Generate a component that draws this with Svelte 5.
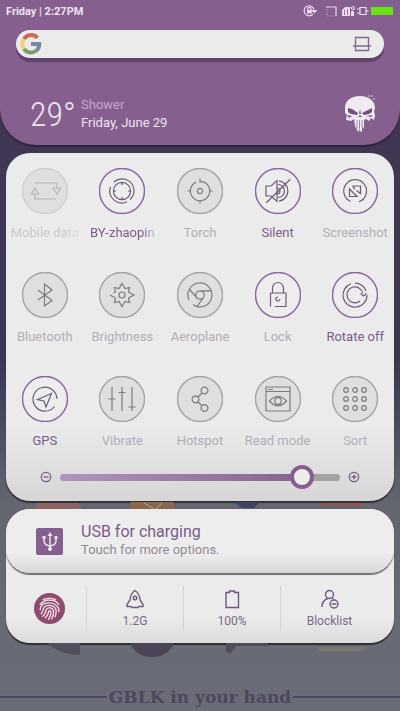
<script lang="ts">
  type Tile = {
    label: string;
    icon: string;
    active?: boolean;
    lit?: boolean;
    faint?: boolean;
    fading?: boolean;
  };

  const ring = (x: number, y: number, r: number) =>
    `M${x - r} ${y}a${r} ${r} 0 1 1 ${2 * r} 0a${r} ${r} 0 1 1 ${-2 * r} 0`;

  const sortDots = [14, 23, 32]
    .flatMap((y) => [14, 23, 32].map((x) => ring(x, y, 2.3)))
    .join('');

  let tiles = $state<Tile[]>([
    {
      label: 'Mobile data',
      faint: true,
      fading: true,
      icon: 'M13 15H35V21M31 20L35 26L38.500 20ZM13 26V31H34M9.500 26L13 20L16.500 26Z',
    },
    {
      label: 'BY-zhaopin',
      active: true,
      lit: true,
      fading: true,
      icon:
        ring(23, 23, 8.6) +
        'M15 14A12 12 0 0 1 35 22A12 12 0 0 1 31 31.500M28 33.800A12 12 0 0 1 11.500 19M23 14.400V17M23 29V31.600M14.400 23H17M29 23H31.600',
    },
    {
      label: 'Torch',
      icon:
        ring(23, 23, 2.6) +
        'M19 14.200A9.700 9.700 0 1 0 23 13.300M23 10.500V14.500M23 32V35.500M10.500 23H14M32 23H35.500',
    },
    {
      label: 'Silent',
      active: true,
      lit: true,
      icon: 'M11 18H16L22 12.500V33.500L16 28H11ZM22 20A3 3 0 0 1 22 26M23 16.500A6.500 6.500 0 0 1 23 29.500M24 12.800A10.300 10.300 0 0 1 24 33.200M11.300 34.700L35.300 11.300',
    },
    {
      label: 'Screenshot',
      lit: true,
      icon: 'M18.500 33.500A11.400 11.400 0 1 1 27 33.800M17.500 21V28.500H25ZM20.500 18H28.500V25.500L24.500 22.500M20.500 18L23 21',
    },
    { label: 'Bluetooth', icon: 'M16 18L30 28.500L22.500 34V12L30 18L16 28' },
    {
      label: 'Brightness',
      icon:
        ring(23, 23, 3) +
        'M11 23L16.500 26L15.500 30.500L20 29.500L23 34.500L26 29.500L30.500 30.500L29.500 26L35 23L29.500 20L30.500 15.500L26 16.500L23 11.500L20 16.500L15.500 15.500L16.500 20L14.500 21',
    },
    {
      label: 'Aeroplane',
      icon:
        ring(23, 23, 4.2) +
        'M16 32.800A12 12 0 1 0 12 28M12.500 17.500L20.500 26.500M23 18.800H34M26.600 25.500L20 34.600',
    },
    {
      label: 'Lock',
      lit: true,
      icon: 'M15.500 34.500V21H31V34.500H20M17.500 21V16A5.500 5.500 0 0 1 28.500 16V21M23 25A2 2 0 1 0 24.800 27',
    },
    {
      label: 'Rotate off',
      active: true,
      lit: true,
      icon: 'M19 11.800A12 12 0 1 0 35 23M23 11.200A12 12 0 0 1 34 19M28 29A8 8 0 1 1 30.800 21.500M28.500 21.500L31.500 24L34.500 21.500',
    },
    {
      label: 'GPS',
      active: true,
      lit: true,
      icon: 'M35 23A12 12 0 1 0 32.500 30.500M29.500 17.500L15.500 23.500L22 25L24 31Z',
    },
    { label: 'Vibrate', icon: 'M13 11V35M23 11V35M33 11V35M9.500 23H16.500M19.500 16.500H26.500M29.500 31H36.500' },
    {
      label: 'Hotspot',
      icon: ring(27.5, 14.5, 3.4) + ring(18.5, 23.5, 3.4) + ring(27.5, 32, 3.4) + 'M25 17L21 21M21 26L25 29.800',
    },
    {
      label: 'Read mode',
      icon: ring(23, 25, 3.3) + 'M11 11H35V35H11ZM11 15.500H35M13 13.500H18M14.500 25Q23 15.500 31.500 25Q23 34.500 14.500 25Z',
    },
    { label: 'Sort', icon: sortDots },
  ]);

  let brightness = $state(90);

  function toggle(tile: Tile) {
    tile.active = !tile.active;
    tile.lit = tile.active;
  }
</script>

<div class="screen">
  <header class="header">
    <div class="status">
      <span class="clock">Friday | 2:27PM</span>
      <svg class="status-icons" viewBox="0 0 92 14" aria-hidden="true">
        <g fill="none" stroke="#ecd9ef" stroke-width="1.2">
          <path d="M11 10A5 5 0 1 1 12 5.500M10.500 6.500H14L12.200 8.500Z" />
          <path d="M5.800 6V5A1.600 1.600 0 0 1 9 5V6" />
          <path d="M24 3H34V12" />
          <path d="M25 5V12H33" stroke-dasharray="1 1.500" opacity=".6" />
          <path d="M58 3.500H64V10.500H58ZM55 5H58M55 9H58M64 7H66.500" />
          <circle cx="51" cy="4" r="1.500" />
        </g>
        <path d="M5 6H9.800V9.600H5ZM40 6L43 3H48V12H40ZM49 7H52V12H49Z" fill="#ecd9ef" />
        <path d="M42.500 6V11M45.500 5V11" stroke="#85608f" stroke-width=".8" />
        <path d="M69 3H91V11H69Z" fill="#68e413" />
      </svg>
    </div>

    <form class="search" onsubmit={(e) => e.preventDefault()}>
      <svg class="google" viewBox="0 0 22 22" fill="none" stroke-width="4" aria-hidden="true">
        <path d="M4 6A8.500 8.500 0 0 1 17.500 4.800" stroke="#cb6a5c" />
        <path d="M4 15.800A8.500 8.500 0 0 1 4 6" stroke="#edd27c" />
        <path d="M16.500 17.500A8.500 8.500 0 0 1 4 15.800" stroke="#79a267" />
        <path d="M11 11H19.300A8.500 8.500 0 0 1 16.500 17.500" stroke="#72899f" />
      </svg>
      <input type="search" aria-label="Search" />
      <button type="submit" aria-label="Scan">
        <svg viewBox="0 0 18 16" fill="none" stroke="#85698d" stroke-width="1.4">
          <path d="M2.500 1.500H15.500V14.500H2.500ZM0 10H18" />
        </svg>
      </button>
    </form>

    <div class="weather">
      <span class="temp">29°</span>
      <div class="forecast">
        <span class="sky">Shower</span>
        <span>Friday, June 29</span>
      </div>
      <svg class="skull" viewBox="0 0 32 38" aria-hidden="true">
        <path
          fill="#f0ebf1"
          d="M1 13C1 5 8 1 16 1C25 1 31 6 31 13L30 17L31 20L30 25L27 23L25 26L22 24L20 25V34L18 31V37L16 36V31L15 37L13 35L11 31L10 24L7 26L2 25L3 20L1 18Z"
        />
        <path
          fill="#74517f"
          d="M4 13L8 14L14 18L13 20L7 19L4 17ZM28 13L24 15L18 18L20 20L25 19L28 17ZM16 14L17 19H15ZM16 20L18 22H14ZM22 21L29 20L27 22ZM3 20L8 21L5 23Z"
        />
        <path d="M13 25V34M15.500 25V33M18 25V32" stroke="#85608f" stroke-width=".7" />
        <path d="M24 1H26M28 0V2M29 4H31" stroke="#f0ebf1" stroke-width=".8" />
      </svg>
    </div>
  </header>

  <section class="panel">
    <div class="tiles">
      {#each tiles as tile (tile.label)}
        <button
          class="tile"
          class:active={tile.active}
          class:lit={tile.lit}
          class:faint={tile.faint}
          type="button"
          aria-pressed={!!tile.active}
          onclick={() => toggle(tile)}
        >
          <svg viewBox="0 0 46 46" aria-hidden="true">
            <circle class="disc" cx="23" cy="23" r="22.500" />
            <path class="glyph" d={tile.icon} />
          </svg>
          <span class="label" class:fading={tile.fading}>{tile.label}</span>
        </button>
      {/each}
    </div>

    <div class="slider">
      <svg viewBox="0 0 12 12" aria-hidden="true">
        <circle cx="6" cy="6" r="4.700" />
        <path d="M3.500 6H8.500" />
      </svg>
      <input
        type="range"
        min="0"
        max="100"
        aria-label="Screen brightness"
        bind:value={brightness}
        style={`--level:${brightness}%`}
      />
      <svg viewBox="0 0 12 12" aria-hidden="true">
        <circle cx="6" cy="6" r="4.700" />
        <path d="M3.500 6H8.500M6 3.500V8.500" />
      </svg>
    </div>
  </section>

  <svg class="peek" viewBox="0 0 388 8" preserveAspectRatio="none" aria-hidden="true">
    <path d="M30 2H72L76 8H30Z" fill="#8b6265" />
    <path d="M124 1H168V8H124Z" fill="#87684f" />
    <path d="M138 2L148 8M156 2L150 8" stroke="#b5a59c" />
    <path d="M228 1H254L248 7H236Z" fill="#3d4361" />
    <path d="M314 2H319V6H314ZM322 2H356V5H322Z" fill="#8b5552" />
  </svg>

  <section class="stack">
    <article class="notice">
      <svg viewBox="0 0 27 27" aria-hidden="true">
        <rect width="27" height="27" rx="2" fill="#85608f" />
        <g fill="none" stroke="#eee4f0" stroke-width="1.500">
          <path d="M14 7V20M8 10V13Q8 17 14 18M20 10V13Q20 17 14 18" />
        </g>
        <path d="M14 4L16.500 8H11.500ZM6.500 8H9.500V11H6.500ZM18.500 8H21.500V11H18.500Z" fill="#eee4f0" />
        <circle cx="14" cy="21" r="2" fill="#eee4f0" />
      </svg>
      <div>
        <h2>USB for charging</h2>
        <p>Touch for more options.</p>
      </div>
    </article>

    <nav class="tools">
      <button class="finger" type="button" aria-label="Fingerprint">
        <svg viewBox="0 0 30 30">
          <circle cx="15" cy="15" r="15" fill="#8d4b6e" />
          <g fill="none" stroke="#f2dfe8" stroke-width="1.300" stroke-linecap="round">
            <path d="M9 6.500Q15 3.500 21 6.500M6 11Q10 6.500 15 6.800Q21 7 24 11" />
            <path d="M6 16Q6 9.500 14.500 9.500Q22 9.500 24 15.500V18" />
            <path d="M7 20Q9 17.500 9 15.500Q10 12 15 12Q21 12.500 21.500 17Q21.500 20 20.500 23" />
            <path d="M8.500 22.500Q11.500 20 11.700 16Q13 14 16 14.500Q19 15.500 19 18Q19 22 17 25" />
            <path d="M11 24Q14 21 14.300 17.500Q16 16.500 16.500 18.500Q16.500 22 14 25.500" />
          </g>
        </svg>
      </button>
      <button type="button">
        <svg viewBox="0 0 20 20">
          <path d="M10 1.500C6.500 4 5 7.500 5 11L2 15.500V17.500H6L7 18.500H13L14 17.500H18V15.500L15 11C15 7.500 13.500 4 10 1.500Z" />
          <circle cx="10" cy="9" r="1.800" />
        </svg>
        <span>1.2G</span>
      </button>
      <button type="button">
        <svg viewBox="0 0 20 20"><path d="M4 3.500H7.500V2H12.500V3.500H16.500V18.500H4Z" /></svg>
        <span>100%</span>
      </button>
      <button type="button">
        <svg viewBox="0 0 20 20">
          <circle cx="9.500" cy="5.500" r="4" />
          <path d="M2 18C2 13.500 4.500 10.500 8 9.500M12 9L13.500 10M11.500 15H16.500" />
          <circle cx="14" cy="15" r="4" />
        </svg>
        <span>Blocklist</span>
      </button>
    </nav>
  </section>

  <svg class="dock" viewBox="0 0 400 16" preserveAspectRatio="none" aria-hidden="true">
    <path d="M47 0H80V12Q60 12 47 0Z" fill="#514e60" />
    <path d="M130 0H174Q168 14 152 14Q136 14 130 0Z" fill="#4b4357" />
    <path d="M226 0H268V3H236L230 11L226 9Z" fill="#514c57" />
    <path d="M316 4H366L362 8H320Z" fill="#777871" />
  </svg>

  <footer class="signature"><span>GBLK in your hand</span></footer>
</div>

<style>
  :global(body) {
    margin: 0;
    background: #666a74;
  }

  .screen {
    min-height: 100vh;
    box-sizing: border-box;
    display: flex;
    flex-direction: column;
    font-family: Roboto, 'Liberation Sans', sans-serif;
    background: linear-gradient(#3b3049 0, #403853 24%, #3b3454 50%, #484a60 59%, #63666f 71%, #6a6d77 100%);
  }

  button,
  input {
    font: inherit;
    margin: 0;
    padding: 0;
    border: 0;
    background: none;
    color: inherit;
  }

  button {
    cursor: pointer;
  }

  svg {
    display: block;
    flex: none;
  }

  .header {
    display: flex;
    flex-direction: column;
    padding-bottom: 10px;
    border-radius: 0 0 36px 36px;
    background: #85608f;
    box-shadow: 0 2px 1px #33233f;
    color: #eee4f0;
  }

  .status {
    display: flex;
    align-items: center;
    justify-content: space-between;
    height: 22px;
    padding: 0 6px;
  }

  .clock {
    font-size: 11px;
    font-weight: 700;
  }

  .status-icons {
    width: 92px;
    height: 14px;
  }

  .search {
    display: flex;
    align-items: center;
    height: 28px;
    margin: 8px 16px 0;
    padding: 0 13px 0 4px;
    border-radius: 14px;
    background: #ebebeb;
    box-shadow: 0 4px 1px #5f4369;
  }

  .search input {
    flex: 1;
    min-width: 0;
    outline: 0;
    color: #604a70;
  }

  .google {
    width: 22px;
    height: 22px;
  }

  .search button svg {
    width: 18px;
    height: 16px;
  }

  .weather {
    display: flex;
    align-items: center;
    height: 42px;
    margin-top: 35px;
    padding: 0 24px 0 30px;
  }

  .temp {
    width: 51px;
    font-family: 'Roboto Condensed', 'Liberation Sans Narrow', Roboto, sans-serif;
    font-size: 34px;
    font-weight: 300;
    line-height: 36px;
    white-space: nowrap;
  }

  .forecast {
    flex: 1;
    display: flex;
    flex-direction: column;
    font-size: 13px;
    line-height: 18px;
  }

  .sky {
    color: #c5a8ce;
  }

  .skull {
    width: 32px;
    height: 38px;
  }

  .panel {
    margin: 8px 6px 0;
    padding: 15px 0 12px;
    border-radius: 24px;
    background: linear-gradient(#ebebeb 78%, #d6d6d7);
    box-shadow: 0 2px 1px #2f2f33;
  }

  .tiles {
    display: grid;
    grid-template-columns: repeat(5, 1fr);
    row-gap: 30px;
  }

  .tile {
    display: flex;
    flex-direction: column;
    align-items: center;
    gap: 10px;
    min-width: 0;
    color: #b5acb8;
  }

  .tile svg {
    width: 46px;
    height: 46px;
  }

  .disc {
    fill: #dfdfdf;
    stroke: #a5a5a5;
    stroke-width: 1.5;
  }

  .glyph {
    fill: none;
    stroke: #7c7c7c;
    stroke-width: 1.2;
  }

  .lit .disc {
    fill: #ededed;
    stroke: #8c68a0;
  }

  .lit .glyph {
    stroke: #6f5b79;
  }

  .active {
    color: #7a5c86;
  }

  .faint {
    color: #cbc6cd;
  }

  .faint .disc {
    stroke: #cfcfcf;
  }

  .faint .glyph {
    stroke: #b5b5b5;
  }

  .label {
    font-size: 13px;
    line-height: 18px;
    white-space: nowrap;
  }

  .fading {
    mask-image: linear-gradient(to right, #000 80%, rgba(0, 0, 0, 0.3));
  }

  .slider {
    display: flex;
    align-items: center;
    gap: 8px;
    height: 24px;
    margin-top: 15px;
    padding: 0 34px;
  }

  .slider svg {
    width: 12px;
    height: 12px;
    fill: none;
    stroke: #7a5c86;
    stroke-width: 1.3;
  }

  .slider input {
    flex: 1;
    min-width: 0;
    height: 24px;
    appearance: none;
  }

  .slider input::-webkit-slider-runnable-track {
    height: 7px;
    border-radius: 4px;
    background:
      linear-gradient(to right, #b293bf, #85608f) 0 / var(--level) 100% no-repeat,
      #a3a3a3;
  }

  .slider input::-webkit-slider-thumb {
    appearance: none;
    width: 24px;
    height: 24px;
    margin-top: -9px;
    box-sizing: border-box;
    border: 4px solid #85608f;
    border-radius: 50%;
    background: #ededed;
  }

  .peek {
    height: 8px;
    margin: 0 6px;
  }

  .stack {
    margin: 0 6px;
    border-radius: 24px;
    background: linear-gradient(#ebebeb 80%, #dcdcdc);
    box-shadow: 0 2px 1px #2f3035;
  }

  .notice {
    display: flex;
    align-items: center;
    gap: 18px;
    height: 64px;
    padding: 0 30px;
    border-radius: 24px;
    background: linear-gradient(#ededed 70%, #d8d8d8);
    box-shadow: 0 2px 1px #737373;
  }

  .notice svg {
    width: 27px;
    height: 27px;
  }

  h2,
  p {
    margin: 0;
    font-weight: 400;
    line-height: 18px;
  }

  h2 {
    font-size: 16px;
    color: #7d5a88;
  }

  p {
    font-size: 13px;
    color: #918a96;
  }

  .tools {
    display: grid;
    grid-template-columns: 80fr 97fr 97fr 98fr;
    padding: 13px 16px 12px 0;
  }

  .tools button {
    display: flex;
    flex-direction: column;
    align-items: center;
    justify-content: center;
    gap: 4px;
    height: 45px;
    font-size: 12px;
    line-height: 16px;
    color: #7d6787;
  }

  .tools button + button {
    border-left: 1px solid #d4d4d4;
  }

  .tools svg {
    width: 20px;
    height: 20px;
    fill: none;
    stroke: #735780;
    stroke-width: 1.4;
  }

  .tools .finger {
    padding-left: 6px;
  }

  .finger svg {
    width: 31px;
    height: 31px;
    stroke: none;
  }

  .dock {
    width: 100%;
    height: 16px;
  }

  .signature {
    display: flex;
    align-items: center;
    gap: 2px;
    margin-top: 28px;
    font-family: 'DejaVu Serif', 'Liberation Serif', serif;
    font-size: 17px;
    font-weight: 700;
    line-height: 20px;
    color: #4d465f;
  }

  .signature::before,
  .signature::after {
    content: '';
    flex: 1;
    height: 2px;
    background: #4d4a66;
    box-shadow: 0 0 1px #8d8e9c;
  }
</style>
